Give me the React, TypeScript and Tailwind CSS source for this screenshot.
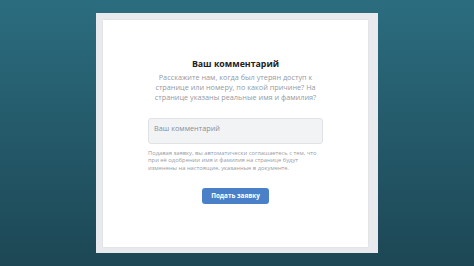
export default function App() {
  return (
    <div
      className="flex h-[266px] w-[474px] items-center justify-center bg-gradient-to-b from-[#2b6d7f] to-[#1d4755]"
      style={{ fontFamily: '"Open Sans", "Noto Sans", sans-serif' }}
    >
      <div className="h-[240px] w-[282px] bg-[#e9eaee] pb-[6px] pl-[7px] pr-[10px] pt-[7px]">
        <div className="flex h-full w-full flex-col items-center bg-white pt-[38px] shadow-[0_0_2px_rgba(0,0,0,0.08)]">
          <h1 className="text-[8.8px] font-bold leading-[12px] text-[#222]">Ваш комментарий</h1>
          <p className="mt-[2px] text-center text-[7.3px] leading-[10px] text-[#959aa3]">
            Расскажите нам, когда был утерян доступ к<br />
            странице или номеру, по какой причине? На<br />
            странице указаны реальные имя и фамилия?
          </p>
          <textarea
            placeholder="Ваш комментарий"
            className="mt-[16px] h-[26px] w-[175px] resize-none rounded-[3px] border border-[#e0e2e6] bg-[#f2f3f5] px-[5px] pt-[4px] text-[7.3px] leading-[10px] text-[#555] placeholder:text-[#8a8f97] outline-none"
          />
          <p className="mt-[6px] w-[175px] text-[5.8px] leading-[7.3px] text-[#979ca4]">
            Подавая заявку, вы автоматически соглашаетесь с тем, что<br />
            при её одобрении имя и фамилия на странице будут<br />
            изменены на настоящие, указанные в документе.
          </p>
          <button className="mt-[16px] h-[16px] w-[67px] rounded-[3px] bg-[#4a80c8] text-[6.4px] font-bold leading-[16px] text-white">
            Подать заявку
          </button>
        </div>
      </div>
    </div>
  );
}
